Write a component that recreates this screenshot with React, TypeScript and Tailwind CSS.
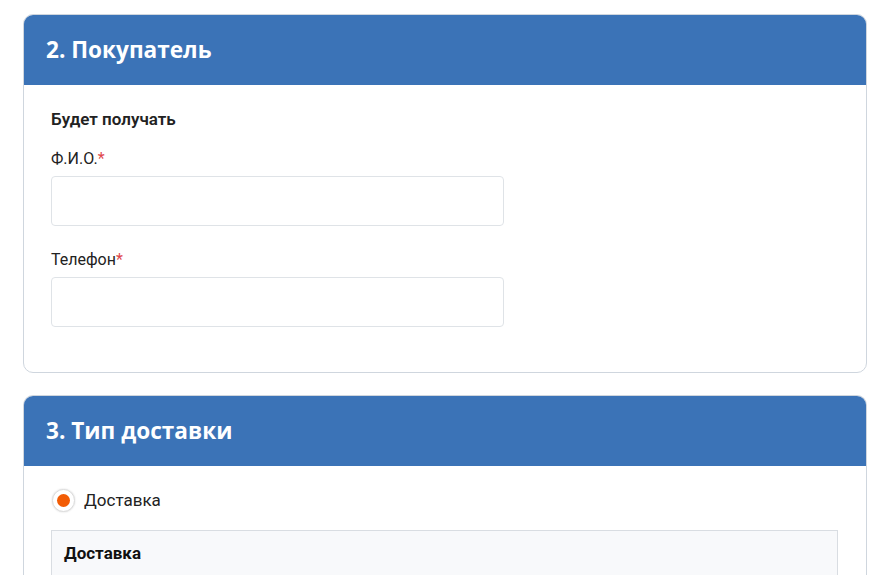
import React from "react";

function Field({ label }: { label: string }) {
  return (
    <div className="flex flex-col">
      <div className="text-[16px] leading-[22px] text-[#222]">
        {label}
        <span className="text-[#e0474c]">*</span>
      </div>
      <div className="mt-[6px] h-[50px] w-[453px] rounded-[4px] border border-[#dfe3e7] bg-white" />
    </div>
  );
}

export default function App() {
  return (
    <div
      className="min-h-[575px] bg-white px-[23px] pt-[14px] pb-[20px]"
      style={{ fontFamily: "Roboto, 'Noto Sans', sans-serif" }}
    >
      <div className="w-[844px] overflow-hidden rounded-[10px] border border-[#cfd6de] bg-white">
        <div className="flex h-[70px] items-center bg-[#3b73b7] px-[22px]">
          <h2
            className="text-[22.6px] font-bold text-white"
            style={{ fontFamily: "'Open Sans', 'Noto Sans', sans-serif" }}
          >
            2. Покупатель
          </h2>
        </div>
        <div className="px-[27px] pt-[23px] pb-[45px]">
          <div className="text-[17px] font-semibold leading-[22px] text-[#222]">Будет получать</div>
          <div className="mt-[18px] flex flex-col gap-[23px]">
            <Field label="Ф.И.О." />
            <Field label="Телефон" />
          </div>
        </div>
      </div>

      <div className="mt-[22px] w-[844px] overflow-hidden rounded-t-[10px] border border-b-0 border-[#cfd6de] bg-white">
        <div className="flex h-[70px] items-center bg-[#3b73b7] px-[22px]">
          <h2
            className="text-[22.6px] font-bold text-white"
            style={{ fontFamily: "'Open Sans', 'Noto Sans', sans-serif" }}
          >
            3. Тип доставки
          </h2>
        </div>
        <div className="px-[27px] pt-[22px]">
          <div className="flex items-center gap-[9px]">
            <div className="ml-[1px] flex h-[23px] w-[23px] items-center justify-center rounded-full border border-[#dcdcdc] bg-white shadow-[0_0_2px_rgba(0,0,0,0.15)]">
              <div className="h-[13px] w-[13px] rounded-full bg-[#f25c05]" />
            </div>
            <span className="text-[17px] leading-[24px] text-[#222]">Доставка</span>
          </div>
          <div className="mt-[18px] h-[80px] w-[787px] border border-[#d9dde2] bg-[#f8f9fb] px-[12px] pt-[11px]">
            <div className="text-[17px] font-bold leading-[22px] text-[#111]">Доставка</div>
          </div>
        </div>
      </div>
    </div>
  );
}
